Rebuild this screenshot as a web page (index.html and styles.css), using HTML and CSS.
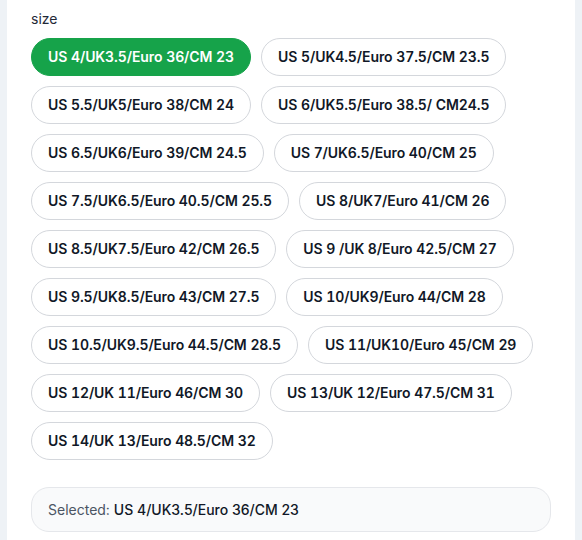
FILE: index.html
```html
<!DOCTYPE html>
<html lang="en">
  <head>
    <meta charset="UTF-8" />
    <meta name="viewport" content="width=device-width, initial-scale=1.0" />
    <title>size picker</title>
    <link rel="stylesheet" href="styles.css">
  </head>
  <body>
    <!-- 尺码选择卡片 -->
    <div class="card">
      <div class="label">size</div>

      <!-- 尺码按钮 -->
      <ul class="sizes">
        <li class="item active">US 4/UK3.5/Euro 36/CM 23</li>
        <li class="item">US 5/UK4.5/Euro 37.5/CM 23.5</li>
        <li class="item">US 5.5/UK5/Euro 38/CM 24</li>
        <li class="item">US 6/UK5.5/Euro 38.5/ CM24.5</li>
        <li class="item">US 6.5/UK6/Euro 39/CM 24.5</li>
        <li class="item">US 7/UK6.5/Euro 40/CM 25</li>
        <li class="item">US 7.5/UK6.5/Euro 40.5/CM 25.5</li>
        <li class="item">US 8/UK7/Euro 41/CM 26</li>
        <li class="item">US 8.5/UK7.5/Euro 42/CM 26.5</li>
        <li class="item">US 9 /UK 8/Euro 42.5/CM 27</li>
        <li class="item">US 9.5/UK8.5/Euro 43/CM 27.5</li>
        <li class="item">US 10/UK9/Euro 44/CM 28</li>
        <li class="item">US 10.5/UK9.5/Euro 44.5/CM 28.5</li>
        <li class="item">US 11/UK10/Euro 45/CM 29</li>
        <li class="item">US 12/UK 11/Euro 46/CM 30</li>
        <li class="item">US 13/UK 12/Euro 47.5/CM 31</li>
        <li class="item">US 14/UK 13/Euro 48.5/CM 32</li>
      </ul>

      <!-- 已选择 -->
      <div class="selected">
        Selected: <span class="value">US 4/UK3.5/Euro 36/CM 23</span>
      </div>
    </div>

    <script>
      const sizesEl = document.querySelector(".sizes");
      const valueEl = document.querySelector(".selected .value");

      sizesEl.addEventListener("click", (e) => {
        if (!e.target.classList.contains("item")) return;
        sizesEl.querySelector(".active").classList.remove("active");
        e.target.classList.add("active");
        valueEl.textContent = e.target.textContent;
      });
    </script>
  </body>
</html>
```

FILE: styles.css
```css
* {
  padding: 0;
  margin: 0;
  box-sizing: border-box;
}

body {
  font-family: Inter, "Liberation Sans", sans-serif;
  font-size: 14px;
  line-height: 20px;
  color: #111827;

  background-color: #eef2f6;
}

.card {
  min-height: 540px;
  margin: 0 7px;
  padding: 9px 24px 24px;

  background-color: #fff;
}

.card .label {
  margin-bottom: 9px;

  color: #1f2937;
}

.card .sizes {
  display: flex;
  flex-wrap: wrap;
  gap: 10px;

  list-style: none;
}

.card .sizes .item {
  padding: 8px 16px;
  border: 1px solid #d4d7dc;
  border-radius: 999px;

  font-weight: 600;
  font-variant-numeric: tabular-nums;
  letter-spacing: -0.08px;
  color: #111827;

  background-color: #fff;
  cursor: pointer;
}

.card .sizes .item.active {
  border-color: #16a34a;

  color: #fff;

  background-color: #16a34a;
}

.card .selected {
  margin-top: 27px;
  padding: 12px 16px;
  border: 1px solid #e5e7eb;
  border-radius: 18px;
  line-height: 19px;

  color: #4b5563;

  background-color: #f9fafb;
}

.card .selected .value {
  font-weight: 500;
  color: #111827;
}
```
